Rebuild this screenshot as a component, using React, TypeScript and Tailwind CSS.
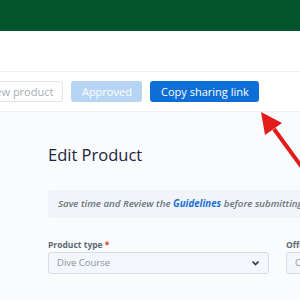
export default function App() {
  return (
    <div className="relative h-[300px] w-[300px] overflow-hidden bg-[#fafbfc] font-['Open_Sans',sans-serif]">
      <div className="h-[31px] bg-[#03552c]" />
      <div className="h-[41px] border-b border-[#eef0f3] bg-white" />
      <div className="ml-[-24px] flex h-[40px] items-center gap-[8px] border-b border-[#eef0f3] bg-white">
        <button className="h-[21px] rounded-[3px] border border-[#dfe4ea] bg-white px-[9px] text-[11px] leading-none text-[#a3acb7]">
          View product
        </button>
        <button className="h-[21px] w-[71px] rounded-[3px] bg-[#b6d4f3] text-[11px] leading-none text-white">
          Approved
        </button>
        <button className="h-[21px] w-[109px] rounded-[3px] bg-[#0d6fd6] text-[11px] leading-none text-white">
          Copy sharing link
        </button>
      </div>
      <div className="pl-[48px] pt-[31px]">
        <h1 className="text-[16.5px] leading-[24px] font-medium text-[#1c2340]">Edit Product</h1>
        <div className="mt-[23px] flex h-[28px] items-center whitespace-nowrap rounded-l-[4px] bg-[#f1f5f9] pl-[10px] text-[9.7px] font-semibold italic text-[#6b737d]">
          Save time and Review the&nbsp;<span className="font-bold text-[#1a6fd4]">Guidelines</span>&nbsp;before submitting your product
        </div>
        <div className="mt-[21px] flex gap-[17px]">
          <div className="w-[221px] shrink-0">
            <div className="text-[8.5px] leading-[12px] font-bold text-[#5d6878]">
              Product type <span className="text-[#e53935]">*</span>
            </div>
            <div className="mt-[1px] flex h-[22px] items-center justify-between rounded-[3px] border border-[#d3dce8] bg-[#f3f6fa] pl-[8px] pr-[8px]">
              <span className="text-[9.5px] text-[#8c949e]">Dive Course</span>
              <svg width="9" height="6" viewBox="0 0 9 6" fill="none">
                <path d="M1.5 1.5 L4.5 4.5 L7.5 1.5" stroke="#2a3142" strokeWidth="1.6" />
              </svg>
            </div>
          </div>
          <div className="w-[120px] shrink-0">
            <div className="text-[8.5px] leading-[12px] font-bold text-[#5d6878]">Offer type</div>
            <div className="mt-[1px] flex h-[22px] items-center rounded-[3px] border border-[#d3dce8] bg-[#f3f6fa] pl-[8px]">
              <span className="text-[9.5px] text-[#8c949e]">Open</span>
            </div>
          </div>
        </div>
      </div>
      <svg className="absolute left-0 top-0" width="300" height="300" viewBox="0 0 300 300">
        <line x1="274" y1="129" x2="304" y2="170" stroke="#e31b1b" strokeWidth="4" />
        <polygon points="261,112 282,123 265,135" fill="#e31b1b" />
      </svg>
    </div>
  );
}
